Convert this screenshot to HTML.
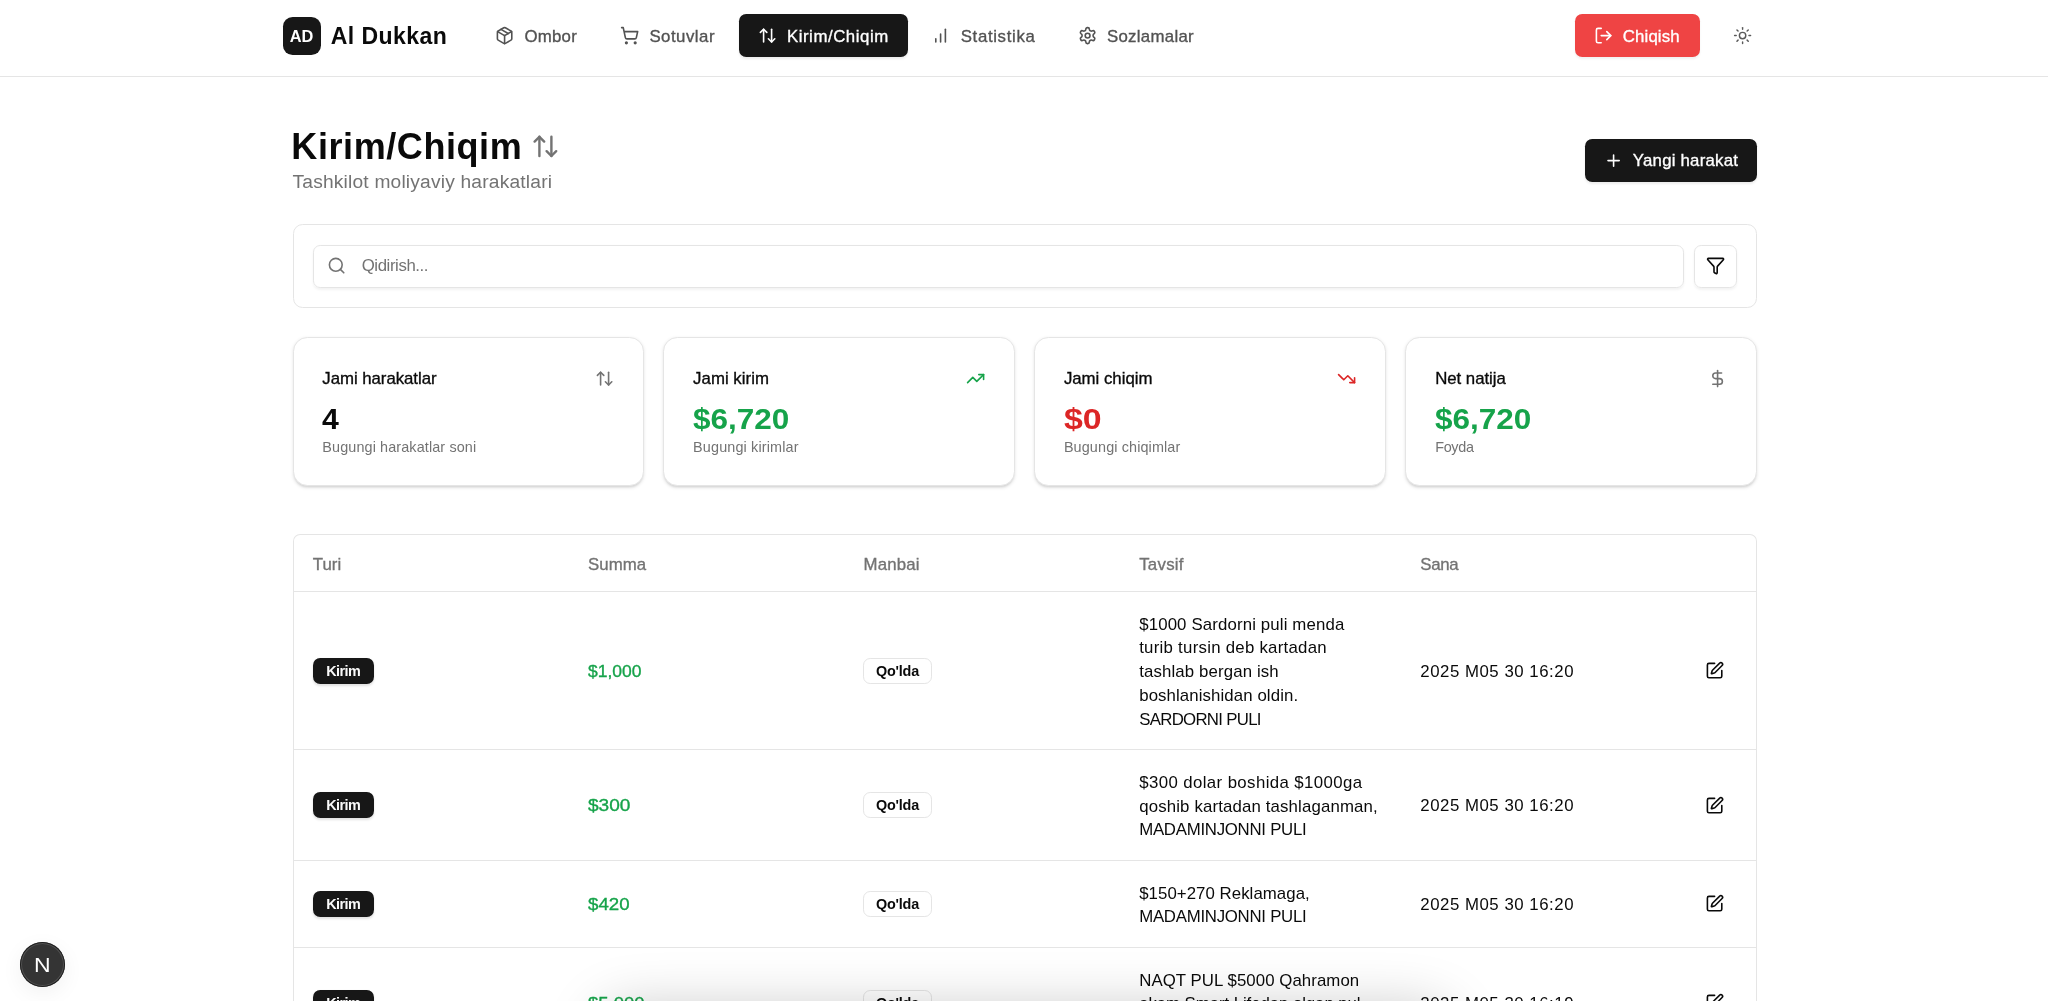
<!DOCTYPE html>
<html lang="uz">
<head>
<meta charset="utf-8">
<title>Al Dukkan - Kirim/Chiqim</title>
<style>
*{box-sizing:border-box;margin:0;padding:0}
a{color:inherit;text-decoration:none}
button{font:inherit;color:inherit;background:none;border:0;text-align:left;cursor:pointer}
h1{font-size:inherit;font-weight:inherit}
html,body{width:2048px;height:1001px;overflow:hidden;background:#fff}
body{font-family:"Liberation Sans",sans-serif;color:#0a0a0a;position:relative}
#z{zoom:1.2;will-change:transform;transform:translateZ(0);position:absolute;left:0;top:0;width:1706.667px;height:834.2px;overflow:hidden}
.t{display:inline-block;white-space:nowrap;transform-origin:0 50%}
svg.i{display:block;fill:none;stroke:currentColor;stroke-width:2;stroke-linecap:round;stroke-linejoin:round}
/* header */
#hd{position:absolute;left:0;top:0;width:100%;height:64px;border-bottom:1px solid #e5e5e5;background:#fff}
#logo{position:absolute;left:235.8px;top:13.8px;width:32px;height:32px;border-radius:8px;background:#171717;color:#fff;font-weight:700;font-size:13.3px;line-height:32.7px;text-align:center}
#logo .t{transform-origin:50% 50%;position:relative;left:-.45px}
#brand{position:absolute;left:275.6px;top:16.65px;font-size:19.2px;line-height:28px;font-weight:700;color:#0a0a0a}
.nb{position:absolute;top:11.9px;height:36px;border-radius:6px;display:flex;align-items:center;padding-left:15.6px;font-size:14px;line-height:20px;color:#525252;font-weight:500}
.nb .t{position:relative;top:.6px}
.nb svg{width:16px;height:16px;margin-right:8.4px;flex:none}
.nb.on{background:#171717;color:#fff;box-shadow:0 1px 2px rgba(0,0,0,.08)}
.nb.red{background:#ef4444;color:#fff;box-shadow:0 1px 2px rgba(0,0,0,.06)}
#sun{position:absolute;left:1444.2px;top:21.8px;width:16px;height:16px;color:#5a5a5a}
#sun svg{width:16px;height:16px;stroke-width:1.8}
/* main */
#mn{position:absolute;left:243.75px;top:0;width:1220.4px}
#ttl{position:absolute;left:-1px;top:104px;font-size:30px;line-height:36px;font-weight:700;letter-spacing:0;color:#0a0a0a;display:flex;align-items:center}
#ttl svg{width:24px;height:24px;margin-left:7px;color:#737373;position:relative;top:-.3px}
#sub{position:absolute;left:0;top:140px;font-size:16px;line-height:24px;color:#737373}
#newb{position:absolute;left:1077px;top:115.7px;width:143.2px;height:35.8px;border-radius:6px;background:#171717;color:#fff;display:flex;align-items:center;padding-left:16px;font-size:14px;line-height:20px;font-weight:500;box-shadow:0 1px 2px rgba(0,0,0,.08)}
#newb .t{position:relative;top:.6px}
#newb svg{width:16px;height:16px;margin-right:8px}
#sc{position:absolute;left:0;top:187px;width:1220.4px;height:70px;border:1px solid #e5e5e5;border-radius:8px;background:#fff}
#si{position:absolute;left:16px;top:16px;width:1142.4px;height:36px;border:1px solid #e5e5e5;border-radius:6px;box-shadow:0 1px 2px rgba(0,0,0,.05);font-size:14px;line-height:34px;color:#737373;padding-left:40px}
#si svg{position:absolute;left:11px;top:9px;width:16px;height:16px;color:#737373}
#fb{position:absolute;left:1167px;top:16px;width:36px;height:36px;border:1px solid #e5e5e5;border-radius:6px;box-shadow:0 1px 2px rgba(0,0,0,.05);color:#0a0a0a}
#fb svg{position:absolute;left:9px;top:9px;width:16px;height:16px}
.st{position:absolute;top:281px;width:293px;height:124px;border:1px solid #e5e5e5;border-radius:12px;background:#fff;box-shadow:0 1px 3px rgba(0,0,0,.1),0 1px 2px -1px rgba(0,0,0,.1)}
.st .h{position:absolute;left:24px;top:24px;font-size:14px;line-height:20px;font-weight:500;color:#0a0a0a}
.st svg{position:absolute;right:24px;top:25.5px;width:16px;height:16px;color:#737373}
.st .v{position:absolute;left:24px;top:51.5px;font-size:24px;line-height:32px;font-weight:700}
.st .s{position:absolute;left:24px;top:83px;font-size:12px;line-height:16px;color:#737373}
.nb .t,#newb .t,.st .h .t,.th .t,.am .t{-webkit-text-stroke:.28px currentColor}
.g,.st svg.g{color:#16a34a}.r,.st svg.r{color:#dc2626}
/* table */
#tb{position:absolute;left:0;top:444.7px;width:1220.4px;height:420px;border:1px solid #e5e5e5;border-bottom:none;border-radius:6px 6px 0 0;background:#fff}
.row{position:absolute;left:0;right:0;border-bottom:1px solid #e5e5e5}
.c{position:absolute;top:0;height:100%;display:flex;align-items:center;padding-left:16px;font-size:14px;line-height:20px}
.c1{left:0}.c2{left:229.5px}.c3{left:459px}.c4{left:688.75px}.c5{left:923px}.c6{left:1150px}
.th .c{color:#737373;font-weight:500}
.th .t{position:relative;top:1.75px}
.th .c5 .t{top:1.8px}
.am .t,.c5 .t{position:relative;top:.75px}
.ds{position:relative;top:1.05px}
.bd{display:inline-flex;align-items:center;height:22px;border-radius:6px;padding:0 10.5px;border:1px solid transparent;font-size:12px;line-height:16px;font-weight:700}
.bd .t{position:relative;top:.6px}
.bd.k{background:#171717;color:#fafafa;box-shadow:0 1px 2px rgba(0,0,0,.12)}
.bd.o{border-color:#e5e5e5;color:#0a0a0a;padding:0 9.6px}
.am{color:#16a34a;font-weight:500}
.ds{display:block}
.ds .t{display:block;height:19.75px;line-height:19.75px;width:max-content}
.ed{position:absolute;left:1176.5px;top:0;width:16px;height:100%;display:flex;align-items:center;color:#0a0a0a}
.ed svg{width:16px;height:16px}
/* overlays */
#sh{position:absolute;left:608px;top:1016px;width:834px;height:120px;border-radius:20px;pointer-events:none;box-shadow:0 0 55px 8px rgba(0,0,0,.22)}
#nx{position:absolute;left:20.2px;top:941.7px;width:45px;height:45px;border-radius:50%;background:#343434;box-shadow:inset 0 0 0 1px #1f1f1f,inset 0 0 0 2px rgba(255,255,255,.14),0 6px 22px rgba(0,0,0,.06);color:#fff;font-size:20px;line-height:46.6px;text-align:center}
#nx span{display:inline-block;position:relative;left:-.7px;transform:scaleX(1.15)}
</style>
</head>
<body>
<div id="z">
<header id="hd">
  <div id="logo"><span class="t" style="transform:scaleX(1.0257)">AD</span></div>
  <div id="brand"><span class="t" style="letter-spacing:0.354px">Al Dukkan</span></div>
  <a class="nb" style="left:397px;width:99.9px"><svg class="i" viewBox="0 0 24 24"><path d="M11 21.73a2 2 0 0 0 2 0l7-4A2 2 0 0 0 21 16V8a2 2 0 0 0-1-1.73l-7-4a2 2 0 0 0-2 0l-7 4A2 2 0 0 0 3 8v8a2 2 0 0 0 1 1.73z"/><path d="M12 22V12"/><path d="M3.29 7 12 12l8.71-5"/><path d="m7.5 4.27 9 5.15"/></svg><span class="t" style="letter-spacing:0.228px">Ombor</span></a>
  <a class="nb" style="left:501.2px;width:110.3px"><svg class="i" viewBox="0 0 24 24"><circle cx="8" cy="21" r="1"/><circle cx="19" cy="21" r="1"/><path d="M2.05 2.05h2l2.66 12.42a2 2 0 0 0 2 1.58h9.78a2 2 0 0 0 1.95-1.57l1.65-7.43H5.12"/></svg><span class="t" style="letter-spacing:0.413px">Sotuvlar</span></a>
  <a class="nb on" style="left:615.8px;width:140.8px"><svg class="i" viewBox="0 0 24 24"><path d="m21 16-4 4-4-4"/><path d="M17 20V4"/><path d="m3 8 4-4 4 4"/><path d="M7 4v16"/></svg><span class="t" style="letter-spacing:0.460px">Kirim/Chiqim</span></a>
  <a class="nb" style="left:760.6px;width:117.9px"><svg class="i" viewBox="0 0 24 24"><path d="M12 20V10"/><path d="M18 20V4"/><path d="M6 20v-4"/></svg><span class="t" style="letter-spacing:0.550px">Statistika</span></a>
  <a class="nb" style="left:882.5px;width:128.3px"><svg class="i" viewBox="0 0 24 24"><path d="M12.22 2h-.44a2 2 0 0 0-2 2v.18a2 2 0 0 1-1 1.73l-.43.25a2 2 0 0 1-2 0l-.15-.08a2 2 0 0 0-2.73.73l-.22.38a2 2 0 0 0 .73 2.73l.15.1a2 2 0 0 1 1 1.72v.51a2 2 0 0 1-1 1.74l-.15.09a2 2 0 0 0-.73 2.73l.22.38a2 2 0 0 0 2.73.73l.15-.08a2 2 0 0 1 2 0l.43.25a2 2 0 0 1 1 1.73V20a2 2 0 0 0 2 2h.44a2 2 0 0 0 2-2v-.18a2 2 0 0 1 1-1.73l.43-.25a2 2 0 0 1 2 0l.15.08a2 2 0 0 0 2.73-.73l.22-.39a2 2 0 0 0-.73-2.73l-.15-.08a2 2 0 0 1-1-1.74v-.5a2 2 0 0 1 1-1.74l.15-.09a2 2 0 0 0 .73-2.73l-.22-.38a2 2 0 0 0-2.73-.73l-.15.08a2 2 0 0 1-2 0l-.43-.25a2 2 0 0 1-1-1.73V4a2 2 0 0 0-2-2z"/><circle cx="12" cy="12" r="3"/></svg><span class="t" style="letter-spacing:0.247px">Sozlamalar</span></a>
  <button type="button" class="nb red" style="left:1312.4px;width:104.5px"><svg class="i" viewBox="0 0 24 24"><path d="M9 21H5a2 2 0 0 1-2-2V5a2 2 0 0 1 2-2h4"/><path d="m16 17 5-5-5-5"/><path d="M21 12H9"/></svg><span class="t" style="letter-spacing:0.093px">Chiqish</span></button>
  <button type="button" id="sun" aria-label="Mavzu"><svg class="i" viewBox="0 0 24 24"><circle cx="12" cy="12" r="4"/><path d="M12 2v2"/><path d="M12 20v2"/><path d="m4.93 4.93 1.41 1.41"/><path d="m17.66 17.66 1.41 1.41"/><path d="M2 12h2"/><path d="M20 12h2"/><path d="m6.34 17.66-1.41 1.41"/><path d="m19.07 4.93-1.41 1.41"/></svg></button>
</header>
<main id="mn">
  <h1 id="ttl"><span class="t" style="letter-spacing:0.483px">Kirim/Chiqim</span><svg class="i" viewBox="0 0 24 24"><path d="m21 16-4 4-4-4"/><path d="M17 20V4"/><path d="m3 8 4-4 4 4"/><path d="M7 4v16"/></svg></h1>
  <p id="sub"><span class="t" style="letter-spacing:0.158px">Tashkilot moliyaviy harakatlari</span></p>
  <button type="button" id="newb"><svg class="i" viewBox="0 0 24 24"><path d="M5 12h14"/><path d="M12 5v14"/></svg><span class="t" style="letter-spacing:0.180px">Yangi harakat</span></button>
  <div id="sc">
    <div id="si"><svg class="i" viewBox="0 0 24 24"><circle cx="11" cy="11" r="8"/><path d="m21 21-4.3-4.3"/></svg><span class="t" style="letter-spacing:-0.342px">Qidirish...</span></div>
    <button type="button" id="fb" aria-label="Filtr"><svg class="i" viewBox="0 0 24 24"><path d="M10 20a1 1 0 0 0 .553.895l2 1A1 1 0 0 0 14 21v-7a2 2 0 0 1 .517-1.341L21.74 4.67A1 1 0 0 0 21 3H3a1 1 0 0 0-.742 1.67l7.225 7.989A2 2 0 0 1 10 14z"/></svg></button>
  </div>
  <div class="st" style="left:0"><div class="h"><span class="t" style="letter-spacing:-0.032px">Jami harakatlar</span></div><svg class="i" viewBox="0 0 24 24"><path d="m21 16-4 4-4-4"/><path d="M17 20V4"/><path d="m3 8 4-4 4 4"/><path d="M7 4v16"/></svg><div class="v"><span class="t" style="transform:scaleX(1.0489)">4</span></div><div class="s"><span class="t" style="letter-spacing:0.100px">Bugungi harakatlar soni</span></div></div>
  <div class="st" style="left:309px"><div class="h"><span class="t" style="letter-spacing:0.024px">Jami kirim</span></div><svg class="i g" viewBox="0 0 24 24"><path d="M22 7l-8.5 8.5-5-5L2 17"/><path d="M16 7h6v6"/></svg><div class="v g"><span class="t" style="transform:scaleX(1.0940)">$6,720</span></div><div class="s"><span class="t" style="letter-spacing:0.120px">Bugungi kirimlar</span></div></div>
  <div class="st" style="left:618px"><div class="h"><span class="t" style="letter-spacing:-0.010px">Jami chiqim</span></div><svg class="i r" viewBox="0 0 24 24"><path d="M22 17l-8.5-8.5-5 5L2 7"/><path d="M16 17h6v-6"/></svg><div class="v r"><span class="t" style="transform:scaleX(1.1763)">$0</span></div><div class="s"><span class="t" style="letter-spacing:0.104px">Bugungi chiqimlar</span></div></div>
  <div class="st" style="left:927.4px"><div class="h"><span class="t" style="letter-spacing:-0.027px">Net natija</span></div><svg class="i" viewBox="0 0 24 24"><path d="M12 2v20"/><path d="M17 5H9.5a3.5 3.5 0 0 0 0 7h5a3.5 3.5 0 0 1 0 7H6"/></svg><div class="v g"><span class="t" style="transform:scaleX(1.0940)">$6,720</span></div><div class="s"><span class="t" style="letter-spacing:-0.259px">Foyda</span></div></div>
  <div id="tb" role="table">
    <div role="row" class="row th" style="top:0;height:48px">
      <div role="columnheader" class="c c1"><span class="t" style="letter-spacing:0.052px">Turi</span></div><div role="columnheader" class="c c2"><span class="t" style="letter-spacing:0.005px">Summa</span></div><div role="columnheader" class="c c3"><span class="t" style="letter-spacing:0.157px">Manbai</span></div><div role="columnheader" class="c c4"><span class="t" style="letter-spacing:0.223px">Tavsif</span></div><div role="columnheader" class="c c5"><span class="t" style="letter-spacing:-0.232px">Sana</span></div>
    </div>
    <div role="row" class="row" style="top:48px;height:131.75px">
      <div role="cell" class="c c1"><span class="bd k"><span class="t" style="letter-spacing:-0.479px">Kirim</span></span></div>
      <div role="cell" class="c c2 am"><span class="t" style="transform:scaleX(1.0417)">$1,000</span></div>
      <div role="cell" class="c c3"><span class="bd o"><span class="t" style="letter-spacing:-0.167px">Qo'lda</span></span></div>
      <div role="cell" class="c c4"><div class="ds"><span class="t" style="letter-spacing:0.117px">$1000 Sardorni puli menda</span><span class="t" style="letter-spacing:0.218px">turib tursin deb kartadan</span><span class="t" style="letter-spacing:0.108px">tashlab bergan ish</span><span class="t" style="letter-spacing:0.083px">boshlanishidan oldin.</span><span class="t" style="letter-spacing:-0.583px">SARDORNI PULI</span></div></div>
      <div role="cell" class="c c5"><span class="t" style="letter-spacing:0.441px">2025 M05 30 16:20</span></div>
      <button type="button" class="ed" aria-label="Tahrirlash"><svg class="i" viewBox="0 0 24 24"><path d="M12 3H5a2 2 0 0 0-2 2v14a2 2 0 0 0 2 2h14a2 2 0 0 0 2-2v-7"/><path d="M18.375 2.625a1 1 0 0 1 3 3l-9.013 9.014a2 2 0 0 1-.853.505l-2.873.84a.5.5 0 0 1-.62-.62l.84-2.873a2 2 0 0 1 .506-.852z"/></svg></button>
    </div>
    <div role="row" class="row" style="top:179.75px;height:92.25px">
      <div role="cell" class="c c1"><span class="bd k"><span class="t" style="letter-spacing:-0.479px">Kirim</span></span></div>
      <div role="cell" class="c c2 am"><span class="t" style="transform:scaleX(1.1365)">$300</span></div>
      <div role="cell" class="c c3"><span class="bd o"><span class="t" style="letter-spacing:-0.167px">Qo'lda</span></span></div>
      <div role="cell" class="c c4"><div class="ds"><span class="t" style="letter-spacing:0.333px">$300 dolar boshida $1000ga</span><span class="t" style="letter-spacing:0.122px">qoshib kartadan tashlaganman,</span><span class="t" style="letter-spacing:-0.219px">MADAMINJONNI PULI</span></div></div>
      <div role="cell" class="c c5"><span class="t" style="letter-spacing:0.441px">2025 M05 30 16:20</span></div>
      <button type="button" class="ed" aria-label="Tahrirlash"><svg class="i" viewBox="0 0 24 24"><path d="M12 3H5a2 2 0 0 0-2 2v14a2 2 0 0 0 2 2h14a2 2 0 0 0 2-2v-7"/><path d="M18.375 2.625a1 1 0 0 1 3 3l-9.013 9.014a2 2 0 0 1-.853.505l-2.873.84a.5.5 0 0 1-.62-.62l.84-2.873a2 2 0 0 1 .506-.852z"/></svg></button>
    </div>
    <div role="row" class="row" style="top:272px;height:72.5px">
      <div role="cell" class="c c1"><span class="bd k"><span class="t" style="letter-spacing:-0.479px">Kirim</span></span></div>
      <div role="cell" class="c c2 am"><span class="t" style="transform:scaleX(1.1109)">$420</span></div>
      <div role="cell" class="c c3"><span class="bd o"><span class="t" style="letter-spacing:-0.167px">Qo'lda</span></span></div>
      <div role="cell" class="c c4"><div class="ds"><span class="t" style="letter-spacing:0.047px">$150+270 Reklamaga,</span><span class="t" style="letter-spacing:-0.219px">MADAMINJONNI PULI</span></div></div>
      <div role="cell" class="c c5"><span class="t" style="letter-spacing:0.441px">2025 M05 30 16:20</span></div>
      <button type="button" class="ed" aria-label="Tahrirlash"><svg class="i" viewBox="0 0 24 24"><path d="M12 3H5a2 2 0 0 0-2 2v14a2 2 0 0 0 2 2h14a2 2 0 0 0 2-2v-7"/><path d="M18.375 2.625a1 1 0 0 1 3 3l-9.013 9.014a2 2 0 0 1-.853.505l-2.873.84a.5.5 0 0 1-.62-.62l.84-2.873a2 2 0 0 1 .506-.852z"/></svg></button>
    </div>
    <div role="row" class="row" style="top:344.5px;height:92.25px">
      <div role="cell" class="c c1"><span class="bd k"><span class="t" style="letter-spacing:-0.479px">Kirim</span></span></div>
      <div role="cell" class="c c2 am"><span class="t" style="transform:scaleX(1.1001)">$5,000</span></div>
      <div role="cell" class="c c3"><span class="bd o"><span class="t" style="letter-spacing:-0.167px">Qo'lda</span></span></div>
      <div role="cell" class="c c4"><div class="ds"><span class="t" style="letter-spacing:0.056px">NAQT PUL $5000 Qahramon</span><span class="t" style="letter-spacing:-0.056px">akam Smart Lifedan olgan pul,</span><span class="t" style="letter-spacing:-0.219px">MADAMINJONNI PULI</span></div></div>
      <div role="cell" class="c c5"><span class="t" style="letter-spacing:0.441px">2025 M05 30 16:19</span></div>
      <button type="button" class="ed" aria-label="Tahrirlash"><svg class="i" viewBox="0 0 24 24"><path d="M12 3H5a2 2 0 0 0-2 2v14a2 2 0 0 0 2 2h14a2 2 0 0 0 2-2v-7"/><path d="M18.375 2.625a1 1 0 0 1 3 3l-9.013 9.014a2 2 0 0 1-.853.505l-2.873.84a.5.5 0 0 1-.62-.62l.84-2.873a2 2 0 0 1 .506-.852z"/></svg></button>
    </div>
  </div>
</main>
</div>
<div id="sh"></div>
<div id="nx"><span>N</span></div>
</body>
</html>
